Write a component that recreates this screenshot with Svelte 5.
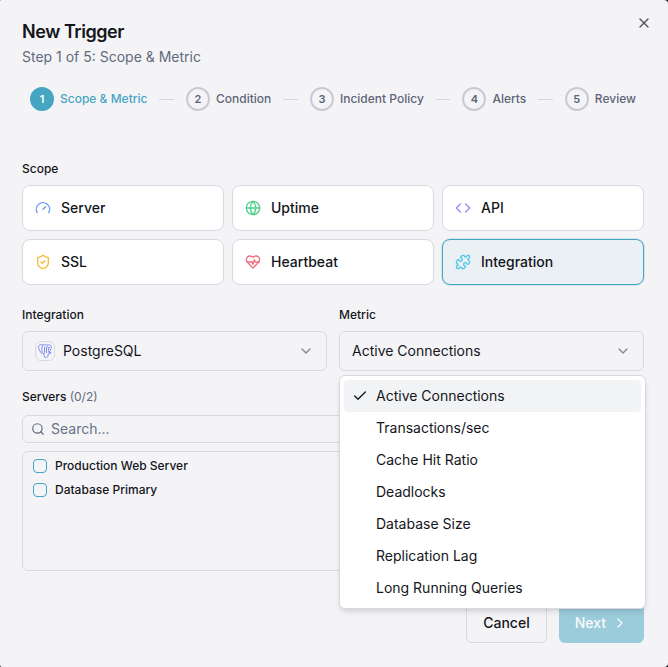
<script lang="ts">
	interface Scope {
		id: string;
		label: string;
		color: string;
		paths: string[];
	}

	const steps = ["Scope & Metric", "Condition", "Incident Policy", "Alerts", "Review"];

	const scopes: Scope[] = [
		{
			id: "server",
			label: "Server",
			color: "#6b9bfa",
			paths: ["m12 14 4-4", "M3.34 19a10 10 0 1 1 17.32 0"],
		},
		{
			id: "uptime",
			label: "Uptime",
			color: "#4fd08b",
			paths: [
				"M22 12a10 10 0 1 1-20 0 10 10 0 0 1 20 0",
				"M12 2a14.5 14.5 0 0 0 0 20 14.5 14.5 0 0 0 0-20",
				"M2 12h20",
			],
		},
		{
			id: "api",
			label: "API",
			color: "#a580fb",
			paths: ["m16 18 6-6-6-6", "m8 6-6 6 6 6"],
		},
		{
			id: "ssl",
			label: "SSL",
			color: "#f5bb35",
			paths: [
				"M20 13c0 5-3.5 7.5-7.66 8.95a1 1 0 0 1-.67-.01C7.5 20.5 4 18 4 13V6a1 1 0 0 1 1-1c2 0 4.5-1.2 6.24-2.72a1.17 1.17 0 0 1 1.52 0C14.51 3.81 17 5 19 5a1 1 0 0 1 1 1z",
				"m9 12 2 2 4-4",
			],
		},
		{
			id: "heartbeat",
			label: "Heartbeat",
			color: "#f26d7e",
			paths: [
				"M19 14c1.49-1.46 3-3.21 3-5.5A5.5 5.5 0 0 0 16.5 3c-1.76 0-3 .5-4.5 2-1.5-1.5-2.74-2-4.5-2A5.5 5.5 0 0 0 2 8.5c0 2.3 1.5 4.05 3 5.5l7 7Z",
				"M3.22 12H9.5l.5-1 2 4.5 2-7 1.5 3.5h5.27",
			],
		},
		{
			id: "integration",
			label: "Integration",
			color: "#4cc5e8",
			paths: [
				"M15.39 4.39a1 1 0 0 0 1.68-.474 2.5 2.5 0 1 1 3.014 3.015 1 1 0 0 0-.474 1.68l1.683 1.682a2.414 2.414 0 0 1 0 3.414L19.61 15.39a1 1 0 0 1-1.68-.474 2.5 2.5 0 1 0-3.014 3.015 1 1 0 0 1 .474 1.68l-1.683 1.682a2.414 2.414 0 0 1-3.414 0L8.61 19.61a1 1 0 0 0-1.68.474 2.5 2.5 0 1 1-3.014-3.015 1 1 0 0 0 .474-1.68l-1.683-1.682a2.414 2.414 0 0 1 0-3.414L4.39 8.61a1 1 0 0 1 1.68.474 2.5 2.5 0 1 0 3.014-3.015 1 1 0 0 1-.474-1.68l1.683-1.682a2.414 2.414 0 0 1 3.414 0z",
			],
		},
	];

	const metrics = [
		"Active Connections",
		"Transactions/sec",
		"Cache Hit Ratio",
		"Deadlocks",
		"Database Size",
		"Replication Lag",
		"Long Running Queries",
	];

	const servers = ["Production Web Server", "Database Primary"];

	let activeScope = $state("integration");
	let metric = $state(metrics[0]);
	let menuOpen = $state(true);
	let search = $state("");
	let selected = $state<string[]>([]);

	const visibleServers = $derived(
		servers.filter((name) => name.toLowerCase().includes(search.toLowerCase())),
	);

	function toggleMenu(event: MouseEvent) {
		// the native popup is replaced by our own list
		event.preventDefault();
		menuOpen = !menuOpen;
	}

	function pickMetric(name: string) {
		metric = name;
		menuOpen = false;
	}
</script>

{#snippet Icon(paths: string[], className: string)}
	<svg class="icon {className}" viewBox="0 0 24 24" aria-hidden="true">
		{#each paths as d}
			<path {d} />
		{/each}
	</svg>
{/snippet}

<div class="dialog" role="dialog" aria-labelledby="dialog-title">
	<button type="button" class="close" aria-label="Close">
		{@render Icon(["M18 6 6 18", "m6 6 12 12"], "icon-md")}
	</button>

	<header>
		<h2 id="dialog-title">New Trigger</h2>
		<p>Step 1 of 5: Scope &amp; Metric</p>
	</header>

	<ol class="stepper">
		{#each steps as step, i}
			{#if i > 0}
				<li class="step-line" aria-hidden="true"></li>
			{/if}
			<li class="step" class:current={i === 0}>
				<span class="step-number">{i + 1}</span>
				<span>{step}</span>
			</li>
		{/each}
	</ol>

	<section>
		<h3 class="label">Scope</h3>
		<div class="scopes">
			{#each scopes as scope}
				<button
					type="button"
					class="scope"
					class:active={activeScope === scope.id}
					aria-pressed={activeScope === scope.id}
					onclick={() => (activeScope = scope.id)}
				>
					<span class="scope-icon" style={`color: ${scope.color}`}>
						{@render Icon(scope.paths, "icon-md")}
					</span>
					{scope.label}
				</button>
			{/each}
		</div>
	</section>

	<div class="fields">
		<div class="field">
			<label class="label" for="integration">Integration</label>
			<div class="select-wrap">
				<span class="brand">
					<svg viewBox="0 0 28 28" aria-hidden="true">
						<path d="M8 19C4 17 1 9 1 5c1-4 5-4 9-3h13c4 0 4 4 3 7-1 3-2 6-4 8h4c-1 3-4 3-6 3v3c0 3-2 4-4 4s-4-2-4-4v-5" />
						<path d="M9 3C7 8 8 12 8 17c1 3 4 2 5 0V6M17 6v12M17 6c3-1 4 0 4 3s0 5 1 8M22 7l2 0" />
					</svg>
				</span>
				<select id="integration" class="with-brand">
					<option>PostgreSQL</option>
				</select>
				{@render Icon(["m6 9 6 6 6-6"], "icon-md chevron")}
			</div>
		</div>

		<div class="field">
			<label class="label" for="metric">Metric</label>
			<div class="select-wrap">
				<select id="metric" bind:value={metric} onmousedown={toggleMenu}>
					{#each metrics as name}
						<option>{name}</option>
					{/each}
				</select>
				{@render Icon(["m6 9 6 6 6-6"], "icon-md chevron")}
				{#if menuOpen}
					<div class="menu" role="listbox" aria-label="Metric">
						{#each metrics as name}
							<button
								type="button"
								class="menu-item"
								role="option"
								aria-selected={metric === name}
								onclick={() => pickMetric(name)}
							>
								<span class="tick">
									{#if metric === name}
										{@render Icon(["M20 6 9 17l-5-5"], "icon-md")}
									{/if}
								</span>
								{name}
							</button>
						{/each}
					</div>
				{/if}
			</div>
		</div>
	</div>

	<section class="servers">
		<label class="label" for="server-search">
			Servers <span class="count">({selected.length}/{servers.length})</span>
		</label>
		<div class="search">
			{@render Icon(["m21 21-4.34-4.34", "M19 11a8 8 0 1 1-16 0 8 8 0 0 1 16 0"], "icon-sm")}
			<input id="server-search" type="text" placeholder="Search..." bind:value={search} />
		</div>
		<div class="server-list">
			{#each visibleServers as name}
				<label class="server">
					<input type="checkbox" value={name} bind:group={selected} />
					{name}
				</label>
			{/each}
		</div>
	</section>

	<footer>
		<button type="button" class="btn cancel">Cancel</button>
		<button type="button" class="btn next" disabled>
			Next
			{@render Icon(["m9 18 6-6-6-6"], "icon-md")}
		</button>
	</footer>
</div>

<style>
	:global(body) {
		background: #18191c;
	}

	.dialog {
		position: relative;
		box-sizing: border-box;
		min-height: 100vh;
		padding: 21px 24px 24px 22px;
		border-radius: 1px 4px 4px 2px;
		background: #f4f4f7;
		color: #14161c;
		font-family: Inter, "Liberation Sans", sans-serif;
		font-size: 14px;
		line-height: 20px;
	}

	.dialog *,
	.dialog *::before {
		box-sizing: border-box;
	}

	button,
	input,
	select {
		margin: 0;
		font: inherit;
		color: inherit;
	}

	h2,
	h3,
	p {
		margin: 0;
	}

	.icon {
		flex: none;
		fill: none;
		stroke: currentColor;
		stroke-width: 2;
		stroke-linecap: round;
		stroke-linejoin: round;
	}

	:global(.icon-md) {
		width: 16px;
		height: 16px;
	}

	:global(.icon-sm) {
		width: 14px;
		height: 14px;
	}

	.close {
		position: absolute;
		top: 15px;
		right: 16px;
		display: flex;
		padding: 0;
		border: 0;
		background: none;
		color: #55575c;
	}

	header {
		display: flex;
		flex-direction: column;
		gap: 4px;
	}

	h2 {
		font-size: 18px;
		font-weight: 600;
		line-height: 22px;
		letter-spacing: -0.025em;
	}

	header p {
		color: #626a7d;
	}

	.stepper {
		display: flex;
		align-items: center;
		gap: 12px;
		margin: 20px 0 48px;
		padding: 0 8px;
		list-style: none;
		color: #5d6577;
		font-size: 12px;
		font-weight: 500;
	}

	.step {
		display: flex;
		align-items: center;
		gap: 6px;
		white-space: nowrap;
	}

	.step-line {
		flex: 1;
		height: 1px;
		background: #d6d7de;
	}

	.step-number {
		display: flex;
		align-items: center;
		justify-content: center;
		width: 24px;
		height: 24px;
		border: 2px solid #c9cad3;
		border-radius: 50%;
		font-size: 11px;
		font-weight: 600;
	}

	.current {
		color: #44a6c1;
	}

	.current .step-number {
		border-color: #44a6c1;
		background: #44a6c1;
		color: #fff;
	}

	.label {
		display: block;
		margin-bottom: 6px;
		font-size: 12px;
		font-weight: 500;
	}

	.scopes {
		display: grid;
		grid-template-columns: repeat(3, 1fr);
		gap: 8px;
	}

	.scope {
		display: flex;
		align-items: center;
		gap: 10px;
		height: 46px;
		padding: 0 12px;
		border: 1px solid #d8d9e2;
		border-radius: 8px;
		background: #fff;
		font-weight: 500;
	}

	.scope.active {
		border-color: #44a6c1;
		background: #ebf0f5;
		box-shadow: 0 0 0 1px rgb(68 166 193 / 20%);
	}

	.scope-icon {
		display: flex;
	}

	.fields {
		display: grid;
		grid-template-columns: repeat(2, 1fr);
		gap: 12px;
		margin: 20px 0 16px;
	}

	.select-wrap {
		position: relative;
		display: flex;
		align-items: center;
	}

	select {
		width: 100%;
		height: 40px;
		padding: 0 36px 0 12px;
		border: 1px solid #d8d9e2;
		border-radius: 6px;
		background: transparent;
		appearance: none;
	}

	select.with-brand {
		padding-left: 40px;
	}

	.select-wrap :global(.chevron) {
		position: absolute;
		right: 13px;
		color: #85878d;
		pointer-events: none;
	}

	.brand {
		position: absolute;
		left: 13px;
		display: flex;
		align-items: center;
		justify-content: center;
		width: 20px;
		height: 20px;
		border: 1px solid #d8d9e2;
		border-radius: 6px;
		pointer-events: none;
	}

	.brand svg {
		width: 14px;
		height: 14px;
		fill: none;
		stroke: #7f8bf2;
		stroke-width: 2;
		overflow: visible;
	}

	.menu {
		position: absolute;
		z-index: 10;
		top: calc(100% + 4px);
		left: 0;
		right: -2px;
		padding: 4px;
		border: 1px solid #d8d9e2;
		border-radius: 6px;
		background: #fff;
		box-shadow:
			0 4px 6px -1px rgb(0 0 0 / 10%),
			0 2px 4px -2px rgb(0 0 0 / 10%);
	}

	.menu-item {
		display: flex;
		align-items: center;
		gap: 8px;
		width: 100%;
		height: 32px;
		padding: 0 8px;
		border: 0;
		border-radius: 4px;
		background: none;
		text-align: left;
	}

	.menu-item[aria-selected="true"] {
		background: #f2f3f5;
	}

	.tick {
		display: flex;
		width: 16px;
	}

	.servers .label {
		margin-bottom: 8px;
	}

	.count {
		color: #626a7d;
		font-weight: 400;
	}

	.search {
		display: flex;
		align-items: center;
		gap: 6px;
		height: 28px;
		padding: 0 8px;
		border: 1px solid #d8d9e2;
		border-radius: 6px;
		color: #626a7d;
	}

	.search input {
		flex: 1;
		min-width: 0;
		padding: 0;
		border: 0;
		outline: 0;
		background: none;
	}

	.search input::placeholder {
		color: #697185;
	}

	.server-list {
		min-height: 120px;
		margin-top: 8px;
		padding: 2px 10px;
		border: 1px solid #d8d9e2;
		border-radius: 6px;
	}

	.server {
		display: flex;
		align-items: center;
		gap: 8px;
		height: 24px;
		font-size: 12px;
		font-weight: 500;
	}

	.server input {
		width: 14px;
		height: 14px;
		border: 1px solid #44a6c1;
		border-radius: 4px;
		appearance: none;
	}

	.server input:checked {
		background: #44a6c1;
	}

	footer {
		display: flex;
		justify-content: flex-end;
		gap: 12px;
		margin-top: 32px;
	}

	.btn {
		display: flex;
		align-items: center;
		gap: 6px;
		height: 40px;
		padding: 0 16px;
		border: 1px solid #d8d9e2;
		border-radius: 6px;
		background: transparent;
		font-weight: 500;
	}

	.next {
		border: 0;
		background: #44a6c1;
		color: #fff;
		opacity: 0.5;
	}
</style>
